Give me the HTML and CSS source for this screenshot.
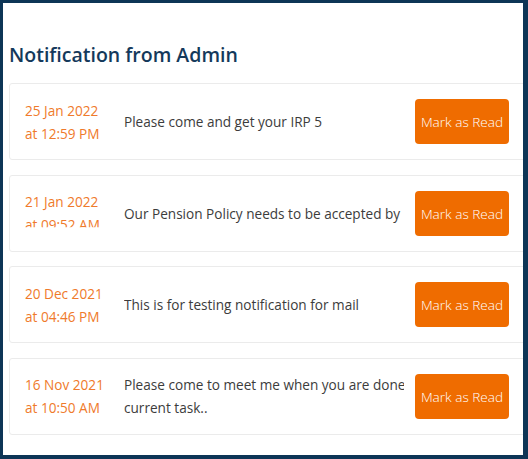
FILE: index.html
```html
<!DOCTYPE html>
<html lang="en">
<head>
<meta charset="utf-8">
<title>Notification from Admin</title>
<link rel="stylesheet" href="styles.css">
</head>
<body>
<div class="panel">
  <h2 class="title">Notification from Admin</h2>
  <div class="list">
    <div class="card">
      <div class="date">25 Jan 2022<br>at 12:59 PM</div>
      <div class="msg">Please come and get your IRP 5</div>
      <button class="btn">Mark as Read</button>
    </div>
    <div class="card">
      <div class="date date-clip">21 Jan 2022<br>at 09:52 AM</div>
      <div class="msg">Our Pension Policy needs to be accepted by</div>
      <button class="btn">Mark as Read</button>
    </div>
    <div class="card">
      <div class="date">20 Dec 2021<br>at 04:46 PM</div>
      <div class="msg">This is for testing notification for mail</div>
      <button class="btn">Mark as Read</button>
    </div>
    <div class="card">
      <div class="date">16 Nov 2021<br>at 10:50 AM</div>
      <div class="msg">Please come to meet me when you are done<br>current task..</div>
      <button class="btn">Mark as Read</button>
    </div>
  </div>
</div>
</body>
</html>
```

FILE: styles.css
```css
html, body {
  margin: 0;
  padding: 0;
}
body {
  background: #0d3556;
  font-family: "Open Sans", "Liberation Sans", sans-serif;
}
.panel {
  background: #ffffff;
  margin: 3px 5px 4px 3px;
  height: 452px;
  box-sizing: border-box;
  padding: 40px 0 0 6px;
  overflow: hidden;
}
.title {
  margin: 0 0 16px 0;
  font-size: 19.5px;
  line-height: 24px;
  font-weight: 600;
  color: #14395b;
}
.list {
  display: flex;
  flex-direction: column;
  gap: 14.67px;
  margin-right: -30px;
}
.card {
  display: flex;
  align-items: center;
  height: 77px;
  box-sizing: border-box;
  border: 1px solid #ebebeb;
  border-radius: 3px;
  padding-left: 15px;
}
.date {
  width: 99px;
  flex: none;
  font-size: 13.6px;
  line-height: 23px;
  color: #ef7a2b;
}
.date-clip {
  clip-path: inset(0 0 9px 0);
}
.msg {
  width: 280px;
  flex: none;
  font-size: 13.6px;
  line-height: 23px;
  color: #3c3c3c;
  white-space: nowrap;
  overflow: hidden;
  margin-right: 11px;
}
.btn {
  flex: none;
  width: 94px;
  height: 45px;
  padding: 0;
  border: none;
  border-radius: 4px;
  background: #ef6c00;
  color: #ffffff;
  font-family: "Open Sans", "Liberation Sans", sans-serif;
  font-size: 13.6px;
  font-weight: 300;
}
```
